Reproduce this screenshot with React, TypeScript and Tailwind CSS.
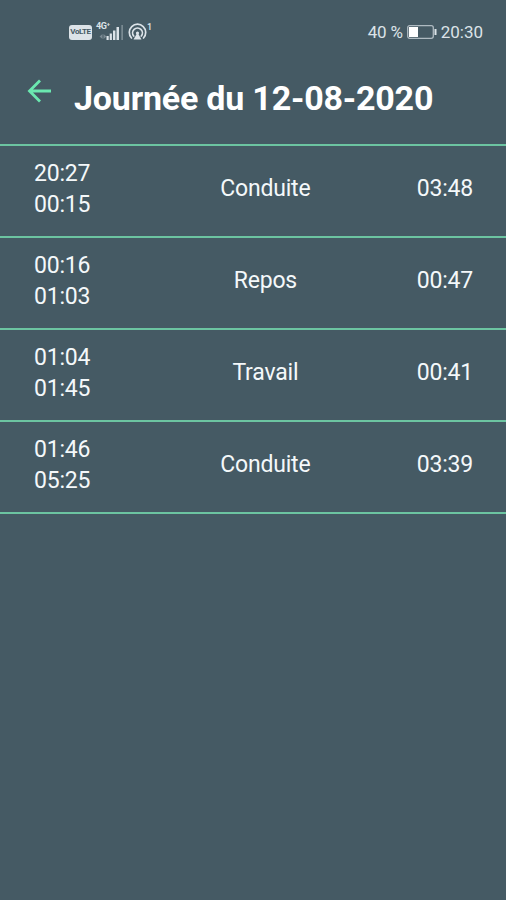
import React from "react";

interface Activity {
  start: string;
  end: string;
  label: string;
  duration: string;
}

// Liste des activités de la journée
const activities: Activity[] = [
  { start: "20:27", end: "00:15", label: "Conduite", duration: "03:48" },
  { start: "00:16", end: "01:03", label: "Repos", duration: "00:47" },
  { start: "01:04", end: "01:45", label: "Travail", duration: "00:41" },
  { start: "01:46", end: "05:25", label: "Conduite", duration: "03:39" },
];

// Icônes du réseau mobile : 4G+, barres de signal
function SignalIcon() {
  return (
    <div className="relative ml-1 h-5 w-7">
      <span className="absolute left-0 top-0 text-[9px] font-bold leading-[9px] tracking-tighter">4G⁺</span>
      <svg width="28" height="20" viewBox="0 0 28 20" fill="currentColor">
        <path d="M3.500 14.500l3-2.500v5zM10.500 14.500l-3-2.500v5z" opacity="0.35" />
        <rect x="10.500" y="14" width="2.200" height="4" />
        <rect x="13.700" y="11.500" width="2.200" height="6.500" />
        <rect x="17" y="8.500" width="2.400" height="9.500" />
        <rect x="20.500" y="5" width="2.500" height="13" />
        <rect x="25.500" y="3" width="1.200" height="15" opacity="0.5" />
      </svg>
    </div>
  );
}

// Icône du point d'accès, avec le nombre d'appareils connectés
function HotspotIcon() {
  return (
    <div className="ml-1 flex h-5 items-start">
      <svg width="19" height="20" viewBox="0 0 19 20" fill="none" stroke="currentColor" strokeWidth="1.700" strokeLinecap="round">
        <path d="M3.500 16a8.200 8.200 0 1 1 12 0" />
        <path d="M5.700 14a4.900 4.900 0 1 1 7.600 0" />
        <path d="M9.500 10.500L5.500 17.500h8z" fill="currentColor" stroke="none" />
        <circle cx="9.500" cy="11" r="1.600" fill="currentColor" stroke="none" />
      </svg>
      <span className="text-[9px] font-medium leading-[10px]">1</span>
    </div>
  );
}

// Barre d'état du téléphone
function StatusBar() {
  return (
    <div className="flex h-16 items-center justify-between pl-[69px] pr-[23px] text-[#dce3e8]">
      <div className="flex items-center">
        <span className="flex h-[15px] w-[23px] items-center justify-center rounded-[3px] bg-[#dce3e8] text-[8px] font-bold tracking-tighter text-[#455a64]">
          VoLTE
        </span>
        <SignalIcon />
        <HotspotIcon />
      </div>
      <div className="flex items-center text-[17px]">
        <span className="pt-px tracking-[-0.2px]">40 %</span>
        <svg width="30" height="14" viewBox="0 0 30 14" className="mx-1" fill="none">
          <rect x="0.700" y="0.700" width="25.600" height="12.600" rx="2" stroke="currentColor" strokeWidth="1.300" opacity="0.7" />
          <rect x="2" y="2" width="9" height="10" fill="white" />
          <rect x="27.500" y="4" width="2" height="6" fill="currentColor" />
        </svg>
        <span className="pt-px">20:30</span>
      </div>
    </div>
  );
}

function App() {
  return (
    <div className="min-h-screen bg-[#455a64] font-['Roboto',sans-serif] text-white">
      <StatusBar />
      {/* En-tête */}
      <header className="flex h-20 items-start pl-[27px]">
        <svg width="26" height="26" viewBox="0 0 26 26" className="mt-3.5" fill="none" stroke="#6be8b0" strokeWidth="2.800">
          <path d="M24 13H3M13 2.500L2.500 13L13 23.500" />
        </svg>
        <h1 className="ml-[21px] mt-3.5 text-[34px] font-bold leading-10 tracking-[-0.200px]">Journée du 12-08-2020</h1>
      </header>
      {/* Liste des activités */}
      <ul className="border-t-2 border-[#6cc4a1]">
        {activities.map((activity) => (
          <li
            key={activity.start}
            className="flex h-[92px] items-center justify-between border-b-2 border-[#6cc4a1] pb-[3px] pl-[34px] pr-[33px] text-[23px] tracking-[-0.200px] text-[#f4f8fa]"
          >
            <div className="w-20 leading-[30.500px]">
              <p>{activity.start}</p>
              <p>{activity.end}</p>
            </div>
            <p className="w-32 text-center">{activity.label}</p>
            <p>{activity.duration}</p>
          </li>
        ))}
      </ul>
    </div>
  );
}

export default App;
